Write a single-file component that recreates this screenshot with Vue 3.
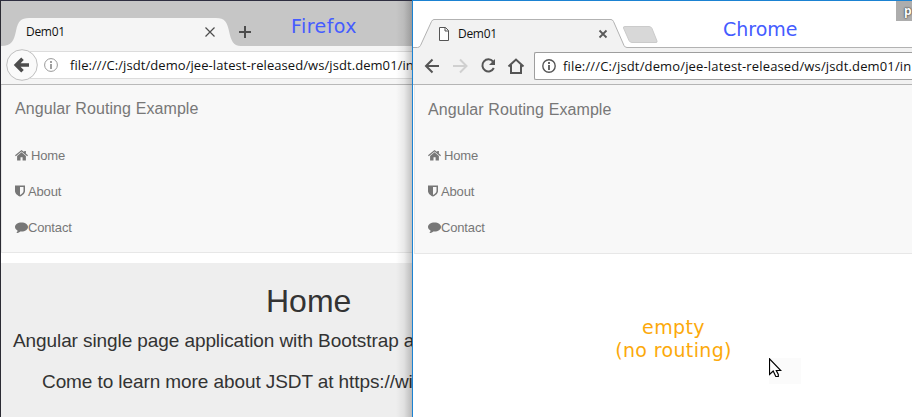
<script setup>
const url = 'file:///C:/jsdt/demo/jee-latest-released/ws/jsdt.dem01/in'
const links = [
  { icon: 'home', label: 'Home' },
  { icon: 'shield', label: 'About' },
  { icon: 'comment', label: 'Contact' },
]
const paths = {
  home: 'M6.500 3.300 10.900 6.900V11.500H7.600V8.300H5.500V11.500H2.100V6.900ZM6.500 .9 9.200 3.100V1.900H10.900V4.500L13 6.200 12.200 7.200 6.500 2.600 .8 7.200 0 6.200Z',
  shield: 'M0 .5H10V6C10 8.6 7.2 10.7 5 11.6 2.8 10.7 0 8.6 0 6ZM5 2V9.9C6.7 9 8.5 7.600 8.500 6V2Z',
  comment: 'M6.500 1.500C10.200 1.500 13 3.500 13 6S10.200 10.500 6.500 10.500L5.300 10.400C4 11.600 2.600 12 1.300 12.100 2 11.400 2.500 10.600 2.500 9.500 1 8.700 0 7.500 0 6 0 3.500 2.800 1.500 6.500 1.500Z',
}
</script>

<template>
  <main class="desktop">
    <section class="firefox">
      <header class="ff-tabs">
        <svg class="strip" width="411" height="45" viewBox="1 1 411 45">
          <path d="M1 46C12 46 14 40 16 31C18 21 21 18 29 18H216C225 18 227 22 229 31C231 40 233 46 241 46Z" fill="#f5f5f5" />
          <path d="M205.500 27.500 214.500 36.500M214.500 27.500 205.500 36.500" stroke="#4d4d4d" stroke-width="1.200" />
          <path d="M239 32H251M245 26V38" stroke="#4d4d4d" stroke-width="2" />
        </svg>
        <span class="ff-title">Dem01</span>
        <span class="note ff-note">Firefox</span>
      </header>
      <div class="ff-bar">
        <svg class="ff-back" width="32" height="32" viewBox="0 0 32 32">
          <circle cx="16" cy="16" r="15.300" fill="#fafafa" stroke="#bebebe" />
          <path d="M23 16H11M16.500 9.800 10.300 16 16.500 22.200" fill="none" stroke="#4d4d4d" stroke-width="3.600" />
        </svg>
        <div class="ff-field">
          <svg width="14" height="14" viewBox="0 0 14 14">
            <circle cx="7" cy="7" r="6.400" fill="none" stroke="#999" />
            <path d="M7 3V5M7 6V11" stroke="#888" stroke-width="1.600" />
          </svg>
          <i class="divider"></i>
          <span class="url">{{ url }}</span>
        </div>
      </div>
      <nav class="nav">
        <div class="brand">Angular Routing Example</div>
        <a v-for="l in links" :key="l.label" class="link" :class="l.icon">
          <svg width="13" height="13" viewBox="0 0 13 13"><path :d="paths[l.icon]" fill="#777" fill-rule="evenodd" /></svg>
          <span>{{ l.label }}</span>
        </a>
      </nav>
      <div class="jumbo">
        <h1>Home</h1>
        <p class="lead">Angular single page application with Bootstrap a</p>
        <p class="learn">Come to learn more about JSDT at https://wi</p>
      </div>
      <div class="shade"></div>
    </section>

    <section class="chrome">
      <header class="ch-tabs">
        <svg class="strip" width="499" height="47" viewBox="413 1 499 47">
          <path d="M413 48V47.500H417.500Q419.500 47.500 420.500 45.500L431.500 21.500Q432.500 19.500 434 19.500H611Q612.500 19.500 613.500 21.500L624 45.500Q625 47.500 627 47.500H913V49H412Z" fill="#f2f2f2" stroke="#b2b2b2" />
          <path d="M625 26.500H649Q651 26.500 652 28.500L657 41Q657.500 42.500 656 42.500H632Q630 42.500 629 40.500L623.500 28Q623 26.500 625 26.500Z" fill="#d8d8d8" stroke="#cbcbcb" />
          <path d="M439.500 27.500H445.500L448.500 30.500V40.500H439.500ZM445 27.500V31H448.500" fill="#fff" stroke="#555" />
          <path d="M599.500 30.500 606.500 37.500M606.500 30.500 599.500 37.500" stroke="#5a5a5a" stroke-width="1.800" />
        </svg>
        <span class="ch-title">Dem01</span>
        <span class="note ch-note">Chrome</span>
        <span class="corner">p</span>
      </header>
      <div class="ch-bar">
        <svg class="ch-icons" width="121" height="36" viewBox="413 48 121 36" fill="none" stroke="#555" stroke-width="2">
          <path d="M439 66H427M432.500 59.500 426 66 432.500 72.500" />
          <path d="M453 66H465M460 59.500 466.500 66 460 72.500" stroke="#d0d0d0" />
          <path d="M493 61.500A6 6 0 1 0 493.800 68" />
          <path d="M495 59V65H489Z" fill="#555" stroke="none" />
          <path d="M508.500 66.500 516 59.500 523.500 66.500M511 65V73H521V65" />
        </svg>
        <div class="omnibox">
          <svg width="14" height="14" viewBox="0 0 14 14">
            <circle cx="7" cy="7" r="6.200" fill="none" stroke="#555" stroke-width="1.400" />
            <path d="M7 3V5M7 6V11" stroke="#555" stroke-width="1.800" />
          </svg>
          <span class="url">{{ url }}</span>
        </div>
      </div>
      <nav class="nav">
        <div class="brand">Angular Routing Example</div>
        <a v-for="l in links" :key="l.label" class="link" :class="l.icon">
          <svg width="13" height="13" viewBox="0 0 13 13"><path :d="paths[l.icon]" fill="#777" fill-rule="evenodd" /></svg>
          <span>{{ l.label }}</span>
        </a>
      </nav>
      <div class="empty"><span>empty</span><span>(no routing)</span></div>
      <div class="pointer">
        <svg width="13" height="20" viewBox="0 0 13 20">
          <path d="M.5 .8V16.500L4.200 13 6.800 18.500H9.300V16.500L7.300 12.500H11.800Z" fill="#fff" stroke="#000" stroke-width="1.200" />
        </svg>
      </div>
    </section>
  </main>
</template>

<style>
body { margin: 0; overflow: hidden; }
</style>

<style scoped>
* { box-sizing: border-box; }
.desktop { display: grid; grid-template-columns: 412px 500px; width: 912px; height: 417px; overflow: hidden; font-family: "Liberation Sans", Arial, sans-serif; background: #fff; }
.firefox { position: relative; display: flex; flex-direction: column; height: 417px; overflow: hidden; border-left: 1px solid #2b2b33; border-top: 1px solid #2e2e40; background: #fff; }
.chrome { position: relative; display: flex; flex-direction: column; height: 417px; overflow: hidden; border-left: 1px solid #1b82d2; border-top: 1px solid #1b82d2; background: #fff; }
svg { display: block; flex: none; }
.ff-tabs, .ch-tabs { position: relative; flex: none; display: flex; white-space: nowrap; }
.ff-tabs { height: 45px; background: #c6c6c6; }
.ch-tabs { height: 47px; }
.strip { position: absolute; left: 0; top: 0; }
.ff-title, .ch-title { position: relative; font: 12px/16px "Open Sans", sans-serif; color: #111; letter-spacing: -.3px; }
.ff-title { margin: 23px 0 0 25px; width: 265px; }
.ch-title { margin: 25px 0 0 45px; width: 265px; }
.note { position: relative; font: 19px/24px "DejaVu Sans", sans-serif; color: #455cff; }
.ff-note { margin-top: 13px; letter-spacing: .45px; }
.ch-note { margin-top: 16px; }
.corner { position: absolute; right: 0; top: 0; width: 16px; height: 20px; padding-left: 8px; background: #adadad; color: #fff; font: bold 12px/20px "Open Sans", sans-serif; text-shadow: 0 0 2px #333, 0 0 1px #333; overflow: hidden; }
.ff-bar { display: flex; align-items: center; flex: none; height: 39px; background: #f5f5f5; border-bottom: 1px solid #b9b9b9; padding-left: 5px; }
.ff-back { position: relative; z-index: 1; margin-right: -8px; }
.ff-field { flex: 1; display: flex; align-items: center; height: 28px; background: #fff; border: solid #dcdcdc; border-width: 1px 0; padding-left: 14px; overflow: hidden; }
.divider { width: 1px; height: 18px; margin: 0 6px 0 6px; background: #d5d5d5; }
.url { font: 13px/20px "Open Sans", sans-serif; letter-spacing: .07px; color: #111; white-space: nowrap; }
.omnibox .url { letter-spacing: .15px; }
.ch-bar { display: flex; align-items: center; flex: none; height: 37px; background: #f2f2f2; border-bottom: 1px solid #b5b5b5; }
.omnibox { flex: 1; display: flex; align-items: center; gap: 7px; height: 28px; margin-bottom: 1px; background: #fff; border: 1px solid #9e9e9e; border-right: 0; border-radius: 2px 0 0 2px; padding-left: 7px; overflow: hidden; }
.nav { flex: none; height: 168px; background: #f8f8f8; border: solid #e7e7e7; border-width: 0 0 1px 1px; padding: 14px 0 0 13px; color: #777; }
.chrome .nav { height: 169px; margin-left: 1px; }
.brand { font-size: 16px; line-height: 20px; margin-bottom: 18px; letter-spacing: .09px; white-space: nowrap; }
.chrome .brand { padding-top: 1px; margin-bottom: 17px; }
.link { display: flex; align-items: center; height: 36px; gap: 3px; font-size: 13px; letter-spacing: -.16px; }
.shield { gap: 0; }
.comment { gap: 0; }
.jumbo { flex: 1; margin-top: 10px; background: #eee; color: #333; white-space: nowrap; }
h1 { margin: 19px 0 0 265px; font-size: 32px; line-height: 38px; font-weight: 400; }
p { margin: 0; font-size: 19px; line-height: 24px; letter-spacing: -.09px; }
.lead { padding: 9px 0 0 12px; }
.learn { padding: 17px 0 0 41px; }
.shade { position: absolute; right: 0; top: 0; width: 16px; height: 100%; background: linear-gradient(90deg, transparent, rgba(0,0,0,.06) 50%, rgba(0,0,0,.22)); }
.empty { display: flex; flex-direction: column; align-items: center; width: 521px; margin-top: 62px; font: 19px/23px "DejaVu Sans", sans-serif; letter-spacing: .36px; color: #fca90a; }
.pointer { position: absolute; left: 356px; top: 357px; width: 32px; height: 26px; background: #fbfbfb; }
</style>
